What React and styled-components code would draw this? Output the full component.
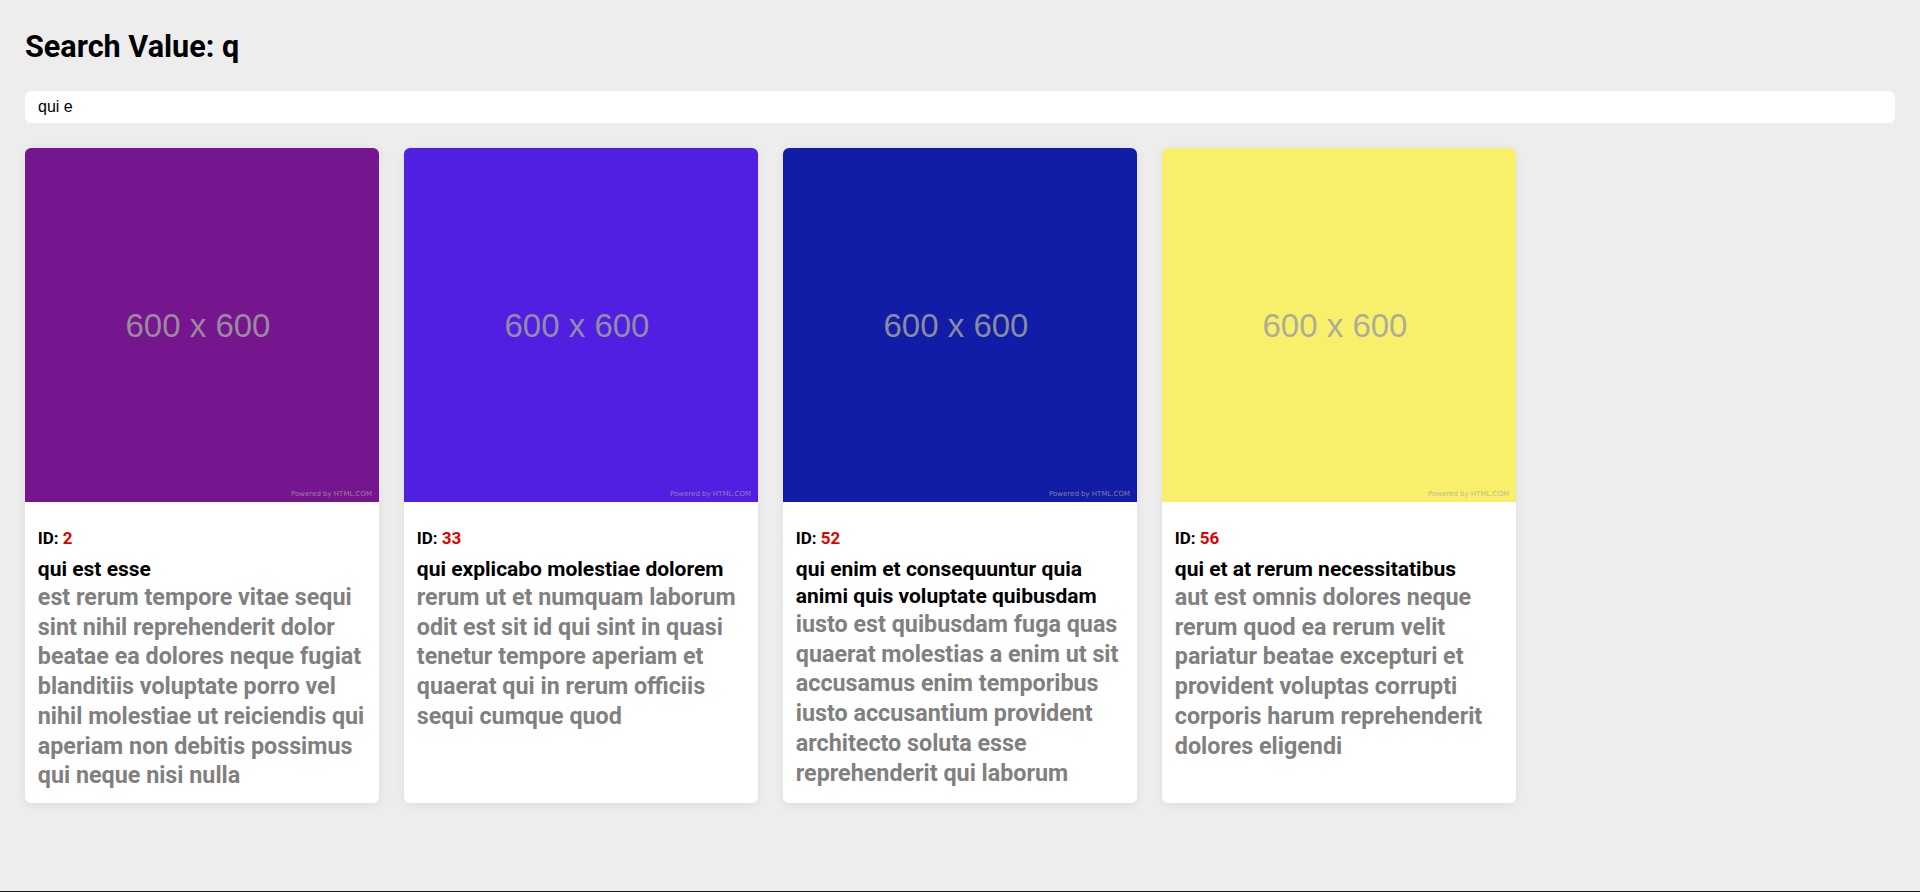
import React from 'react';
import styled, { createGlobalStyle } from 'styled-components';

const GlobalStyle = createGlobalStyle`
    html {
        background: #1c1c1c;
    }
    body {
        margin: 0;
        font-family: Roboto, "Noto Sans", sans-serif;
    }
`

const Page = styled.div`
    min-height: calc(100vh - 1px);
    box-sizing: border-box;
    padding: 25px;
    background: #ededed;
`
const Heading = styled.h1`
    margin: 4px 0 0;
    font-size: 30.6px;
    line-height: 36px;
    font-weight: 700;
    color: #000;
`
const SearchInput = styled.input`
    display: block;
    box-sizing: border-box;
    width: 100%;
    height: 32px;
    margin-top: 26px;
    padding: 0 13px;
    border: none;
    border-radius: 6px;
    background: #fff;
    font-family: "Liberation Sans", Arial, sans-serif;
    font-size: 16px;
    color: #000;
    outline: none;
`
const Grid = styled.div`
    display: grid;
    grid-template-columns: repeat(5, 1fr);
    gap: 25px;
    margin-top: 25px;
`
const Card = styled.div`
    background: #fff;
    border-radius: 6px;
    overflow: hidden;
    box-shadow: 0 2px 10px rgba(0, 0, 0, 0.07);
`
const Thumb = styled.div`
    position: relative;
    aspect-ratio: 1 / 1;
    display: flex;
    align-items: center;
    justify-content: center;
    background: ${props => props.color};
`
const ThumbLabel = styled.span`
    margin: 2px 8px 0 0;
    font-family: "Liberation Sans", Arial, sans-serif;
    font-size: 33px;
    color: rgba(160, 160, 160, 0.85);
`
const Powered = styled.span`
    position: absolute;
    right: 7px;
    bottom: 4px;
    font-family: "DejaVu Sans", sans-serif;
    font-size: 7px;
    color: rgba(165, 165, 165, 0.75);
`
const Body = styled.div`
    padding: 24px 9px 12px 12.8px;
`
const IdLine = styled.div`
    font-size: 17px;
    line-height: 24px;
    font-weight: 700;
    color: #000;
    margin-bottom: 6px;
    span {
        color: #e00000;
    }
`
const Title = styled.div`
    font-size: 21px;
    line-height: 27px;
    font-weight: 700;
    color: #000;
`
const Text = styled.div`
    font-size: 23.3px;
    line-height: 29.7px;
    font-weight: 700;
    color: #808080;
`

const posts = [
    {
        id: 2,
        color: '#76168f',
        title: 'qui est esse',
        body: 'est rerum tempore vitae sequi sint nihil reprehenderit dolor beatae ea dolores neque fugiat blanditiis voluptate porro vel nihil molestiae ut reiciendis qui aperiam non debitis possimus qui neque nisi nulla'
    },
    {
        id: 33,
        color: '#511fe1',
        title: 'qui explicabo molestiae dolorem',
        body: 'rerum ut et numquam laborum odit est sit id qui sint in quasi tenetur tempore aperiam et quaerat qui in rerum officiis sequi cumque quod'
    },
    {
        id: 52,
        color: '#111da6',
        title: 'qui enim et consequuntur quia animi quis voluptate quibusdam',
        body: 'iusto est quibusdam fuga quas quaerat molestias a enim ut sit accusamus enim temporibus iusto accusantium provident architecto soluta esse reprehenderit qui laborum'
    },
    {
        id: 56,
        color: '#f8f06a',
        title: 'qui et at rerum necessitatibus',
        body: 'aut est omnis dolores neque rerum quod ea rerum velit pariatur beatae excepturi et provident voluptas corrupti corporis harum reprehenderit dolores eligendi'
    }
];

const PostCard = ({ post }) => (
    <Card>
        <Thumb color={post.color}>
            <ThumbLabel>600 x 600</ThumbLabel>
            <Powered>Powered by HTML.COM</Powered>
        </Thumb>
        <Body>
            <IdLine>ID: <span>{post.id}</span></IdLine>
            <Title>{post.title}</Title>
            <Text>{post.body}</Text>
        </Body>
    </Card>
)

const App = () => {
    return (
        <Page>
            <GlobalStyle />
            <Heading>Search Value: q</Heading>
            <SearchInput defaultValue="qui e" />
            <Grid>
                {posts.map(post => <PostCard key={post.id} post={post} />)}
            </Grid>
        </Page>
    )
}

export default App;
